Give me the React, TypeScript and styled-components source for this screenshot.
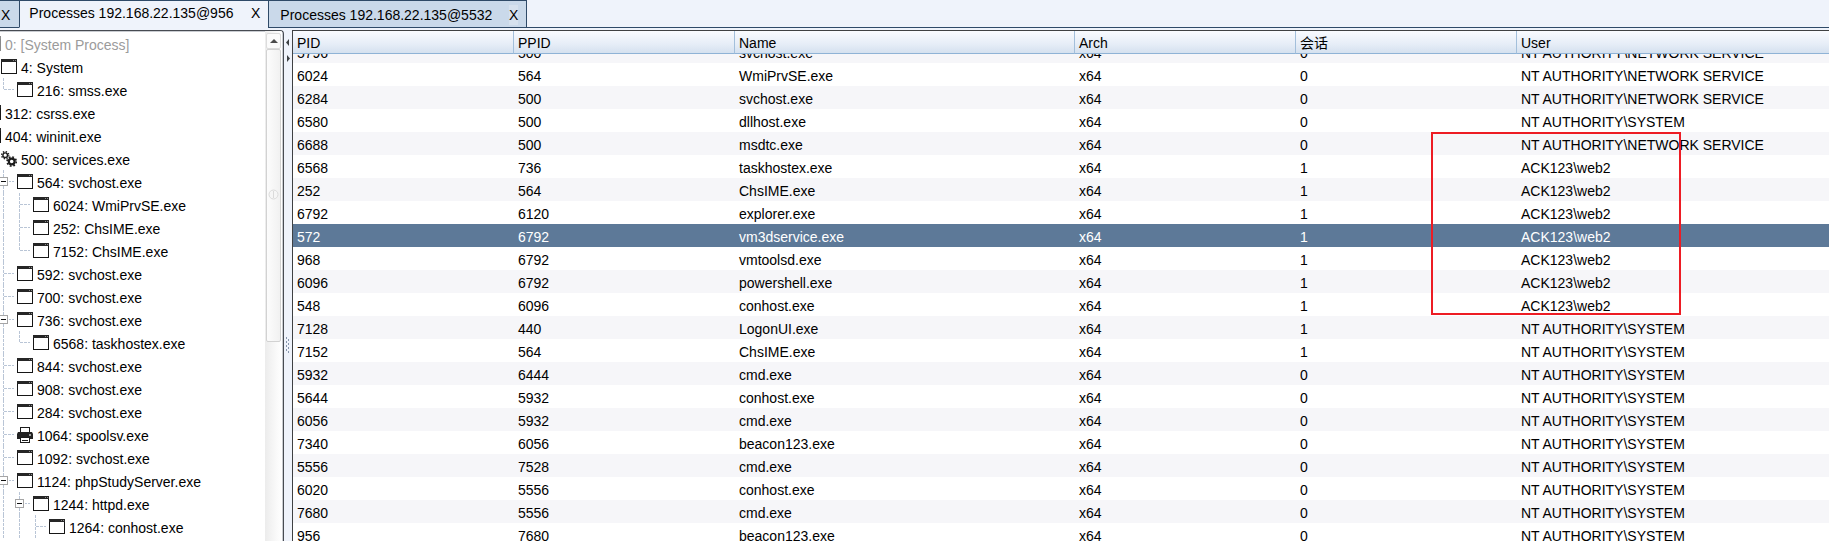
import React, { useLayoutEffect, useRef } from "react";
import styled, { createGlobalStyle, css } from "styled-components";

const GlobalStyle = createGlobalStyle`
  * { box-sizing: border-box; }
  body {
    margin: 0;
    background: #eff3fb;
    color: #000;
    font: 14px/20px "Liberation Sans", "Noto Sans CJK SC", Arial, sans-serif;
    overflow: hidden;
  }
  button { font: inherit; color: inherit; background: none; border: 0; padding: 0; }
`;

const navy = "#2f4a68";

const Window = styled.div`
  display: flex;
  flex-direction: column;
  height: 100vh;
`;

const TabBar = styled.div`
  display: flex;
  height: 28px;
  flex: none;
`;

const TabFiller = styled.div`
  flex: 1;
  border-bottom: 1px solid ${navy};
`;

const TabItem = styled.div<{ $active?: boolean; $clipped?: boolean }>`
  display: flex;
  justify-content: space-between;
  align-items: flex-start;
  gap: 14px;
  flex: none;
  border: 1px solid ${navy};
  background: #cad9ea;
  padding: 4px 8px 0 11px;
  min-width: 259px;
  ${(p) =>
    p.$active &&
    css`
      background: #eff3fb;
      border-bottom-color: #eff3fb;
      border-right: 0;
      padding: 2px 8px 0 9px;
      min-width: 249px;
    `}
  ${(p) =>
    p.$clipped &&
    css`
      border-left: 0;
      border-right: 0;
      padding: 4px 9px 0 1px;
      min-width: 0;
    `}
`;

const TabLabel = styled.button`
  white-space: nowrap;
`;

const CloseButton = styled.button<{ $lit?: boolean }>`
  background: ${(p) => (p.$lit ? "#d6e1ee" : "transparent")};
`;

const Panes = styled.div`
  display: flex;
  flex: 1;
  min-height: 0;
  padding-top: 2px;
`;

const TreePane = styled.section`
  display: flex;
  flex: none;
  width: 284px;
  background: #fff;
  border: 1px solid #474b52;
  border-left: 0;
  border-bottom: 0;
  border-top-right-radius: 4px;
  box-shadow: inset -1px 1px 0 #c9ccd1;
  padding-right: 1px;
  overflow: hidden;
`;

const TreeList = styled.ul`
  flex: 1;
  min-width: 0;
  list-style: none;
  margin: 0 0 0 -15px;
  padding: 1px 0 0;
`;

const TreeItem = styled.li<{ $disabled?: boolean }>`
  display: flex;
  align-items: center;
  height: 23px;
  color: ${(p) => (p.$disabled ? "#9b9b9b" : "#000")};
  svg { flex: none; }
`;

const TreeLabel = styled.span`
  padding: 3px 0 0 4px;
  white-space: nowrap;
`;

const ScrollTrack = styled.div`
  display: flex;
  flex-direction: column;
  align-items: center;
  flex: none;
  width: 17px;
  padding-top: 2px;
  background: linear-gradient(90deg, #ececec, #fafafa 70%, #fff);
`;

const ScrollArrow = styled.button`
  display: flex;
  width: 15px;
  height: 16px;
  align-items: center;
  justify-content: center;
  background: #fbfbfb;
  border: 1px solid #dcdcdc;
  border-radius: 2px;
`;

const ScrollThumb = styled.div`
  display: flex;
  justify-content: center;
  width: 15px;
  height: 293px;
  padding-top: 139px;
  background: linear-gradient(90deg, #fcfcfc, #f1f1f1);
  border: 1px solid #d2d2d2;
  border-radius: 2px;
`;

const Divider = styled.div`
  display: flex;
  flex-direction: column;
  align-items: center;
  flex: none;
  width: 8px;
  padding-top: 9px;
  gap: 9px;
`;

const DividerButton = styled.button`
  display: flex;
`;

const Grip = styled.svg`
  margin-top: 266px;
`;

const TablePane = styled.section`
  position: relative;
  flex: 1;
  min-width: 0;
  border-left: 1px solid #3f4143;
  border-top: 1px solid #3f4143;
`;

const TableScroller = styled.div`
  height: 100%;
  overflow: auto;
  background: #fff;
  scrollbar-width: none;
`;

const ProcessTable = styled.table`
  width: 100%;
  table-layout: fixed;
  border-collapse: separate;
  border-spacing: 0;
`;

const Column = styled.col<{ $width?: number }>`
  width: ${(p) => (p.$width ? `${p.$width}px` : "auto")};
`;

const HeadCell = styled.th`
  position: sticky;
  top: 0;
  height: 23px;
  padding: 2px 4px 0;
  line-height: 20px;
  font-weight: 400;
  text-align: left;
  background: linear-gradient(#f9fbff, #e6edf7 60%, #d5e1ef);
  border-bottom: 1px solid #8fb3d6;
  border-right: 1px solid #a3bfdb;
  &:last-child { border-right: 0; }
`;

const Row = styled.tr<{ $selected?: boolean }>`
  background: #fff;
  &:nth-child(odd) { background: #f6f6f9; }
  ${(p) =>
    p.$selected &&
    css`
      && { background: #5d7998; color: #fff; }
    `}
`;

const Cell = styled.td`
  height: 23px;
  padding: 3px 4px 0;
  white-space: nowrap;
`;

const Highlight = styled.div`
  position: absolute;
  left: 1138px;
  top: 101px;
  width: 250px;
  height: 183px;
  border: 2px solid #ed1c24;
  pointer-events: none;
`;

/* Branch lines of one tree level: "|" passes by, "T" branches, "L" ends,
   "+" branches at an expanded node, "." is empty. */
const Branch = ({ kind }: { kind: string }) => (
  <svg width="16" height="23" overflow="visible" aria-hidden="true">
    {"|T+".includes(kind) && (
      <path d="M2.5 0V23" stroke="#b9c5d6" strokeDasharray="3 1" fill="none" />
    )}
    {kind === "L" && (
      <path d="M2.5 0V12" stroke="#b9c5d6" strokeDasharray="3 1" fill="none" />
    )}
    {"TL".includes(kind) && (
      <path d="M3 11.5H13" stroke="#b9c5d6" strokeDasharray="3 1" fill="none" />
    )}
    {kind === "+" && (
      <g>
        <path d="M8 11.5H13" stroke="#b9c5d6" strokeDasharray="2 1" />
        <rect x="-1.5" y="7.5" width="8" height="8" fill="#fff" stroke="#a5a5a5" />
        <path d="M0 11.5H5" stroke="#111" />
      </g>
    )}
  </svg>
);

const WindowIcon = ({ faded }: { faded?: boolean }) => (
  <svg width="16" height="15" opacity={faded ? 0.5 : 1} aria-hidden="true">
    <rect x="0.5" y="0.5" width="15" height="14" fill="#fff" stroke="#161616" />
    <rect width="16" height="3" fill="#262626" />
    <path d="M12 1.5H13M14 1.5H15" stroke="#8a8a8a" />
  </svg>
);

const GearsIcon = () => (
  <svg width="16" height="16" fill="none" stroke="#1c1c1c" aria-hidden="true">
    <circle cx="4.2" cy="4.2" r="2.3" strokeWidth="1.4" />
    <circle cx="4.2" cy="4.2" r="3.6" strokeWidth="1.4" strokeDasharray="1.4 1.43" />
    <circle cx="10.7" cy="10.5" r="2.9" strokeWidth="2.2" />
    <circle cx="10.7" cy="10.5" r="4.6" strokeWidth="1.6" strokeDasharray="1.8 1.81" />
  </svg>
);

const PrinterIcon = () => (
  <svg width="16" height="16" aria-hidden="true">
    <rect x="3.5" y="0.5" width="9" height="6" fill="#fff" stroke="#1c1c1c" />
    <path d="M1 5H15L16 7V12H0V7Z" fill="#222" />
    <rect x="12" y="7" width="2" height="2" fill="#999" />
    <rect x="3.5" y="10.5" width="9" height="5" fill="#fff" stroke="#1c1c1c" />
    <path d="M5 13.5H11" stroke="#1c1c1c" />
  </svg>
);

type Node = { branches: string; label: string; icon?: "gears" | "printer"; disabled?: boolean };

const nodes: Node[] = [
  { branches: "", label: "0: [System Process]", disabled: true },
  { branches: ".", label: "4: System" },
  { branches: ".L", label: "216: smss.exe" },
  { branches: "", label: "312: csrss.exe" },
  { branches: "", label: "404: wininit.exe" },
  { branches: ".", label: "500: services.exe", icon: "gears" },
  { branches: ".+", label: "564: svchost.exe" },
  { branches: ".|T", label: "6024: WmiPrvSE.exe" },
  { branches: ".|T", label: "252: ChsIME.exe" },
  { branches: ".|L", label: "7152: ChsIME.exe" },
  { branches: ".T", label: "592: svchost.exe" },
  { branches: ".T", label: "700: svchost.exe" },
  { branches: ".+", label: "736: svchost.exe" },
  { branches: ".|L", label: "6568: taskhostex.exe" },
  { branches: ".T", label: "844: svchost.exe" },
  { branches: ".T", label: "908: svchost.exe" },
  { branches: ".T", label: "284: svchost.exe" },
  { branches: ".T", label: "1064: spoolsv.exe", icon: "printer" },
  { branches: ".T", label: "1092: svchost.exe" },
  { branches: ".+", label: "1124: phpStudyServer.exe" },
  { branches: ".|+", label: "1244: httpd.exe" },
  { branches: ".||T", label: "1264: conhost.exe" },
];

const columns: { title: string; width?: number }[] = [
  { title: "PID", width: 221 },
  { title: "PPID", width: 221 },
  { title: "Name", width: 340 },
  { title: "Arch", width: 221 },
  { title: "会话", width: 221 },
  { title: "User" },
];

const NET = "NT AUTHORITY\\NETWORK SERVICE";
const SYS = "NT AUTHORITY\\SYSTEM";
const WEB = "ACK123\\web2";

const processes: [number, number, string, number, string][] = [
  [5796, 500, "svchost.exe", 0, NET],
  [6024, 564, "WmiPrvSE.exe", 0, NET],
  [6284, 500, "svchost.exe", 0, NET],
  [6580, 500, "dllhost.exe", 0, SYS],
  [6688, 500, "msdtc.exe", 0, NET],
  [6568, 736, "taskhostex.exe", 1, WEB],
  [252, 564, "ChsIME.exe", 1, WEB],
  [6792, 6120, "explorer.exe", 1, WEB],
  [572, 6792, "vm3dservice.exe", 1, WEB],
  [968, 6792, "vmtoolsd.exe", 1, WEB],
  [6096, 6792, "powershell.exe", 1, WEB],
  [548, 6096, "conhost.exe", 1, WEB],
  [7128, 440, "LogonUI.exe", 1, SYS],
  [7152, 564, "ChsIME.exe", 1, SYS],
  [5932, 6444, "cmd.exe", 0, SYS],
  [5644, 5932, "conhost.exe", 0, SYS],
  [6056, 5932, "cmd.exe", 0, SYS],
  [7340, 6056, "beacon123.exe", 0, SYS],
  [5556, 7528, "cmd.exe", 0, SYS],
  [6020, 5556, "conhost.exe", 0, SYS],
  [7680, 5556, "cmd.exe", 0, SYS],
  [956, 7680, "beacon123.exe", 0, SYS],
];

const selectedPid = 572;
const initialScroll = 14;

export default function App() {
  const scroller = useRef<HTMLDivElement>(null);

  useLayoutEffect(() => {
    if (scroller.current) scroller.current.scrollTop = initialScroll;
  }, []);

  return (
    <Window>
      <GlobalStyle />
      <TabBar>
        <TabItem $clipped>
          <CloseButton>X</CloseButton>
        </TabItem>
        <TabItem $active>
          <TabLabel>Processes 192.168.22.135@956</TabLabel>
          <CloseButton>X</CloseButton>
        </TabItem>
        <TabItem>
          <TabLabel>Processes 192.168.22.135@5532</TabLabel>
          <CloseButton $lit>X</CloseButton>
        </TabItem>
        <TabFiller />
      </TabBar>
      <Panes>
        <TreePane>
          <TreeList role="tree" aria-label="Processes">
            {nodes.map((n) => (
              <TreeItem key={n.label} role="treeitem" $disabled={n.disabled}>
                {n.branches.split("").map((kind, i) => (
                  <Branch key={i} kind={kind} />
                ))}
                {n.icon === "gears" ? (
                  <GearsIcon />
                ) : n.icon === "printer" ? (
                  <PrinterIcon />
                ) : (
                  <WindowIcon faded={n.disabled} />
                )}
                <TreeLabel>{n.label}</TreeLabel>
              </TreeItem>
            ))}
          </TreeList>
          <ScrollTrack>
            <ScrollArrow aria-label="Scroll up">
              <svg width="8" height="4">
                <path d="M0 4L4 0L8 4Z" fill="#4c4c4c" />
              </svg>
            </ScrollArrow>
            <ScrollThumb>
              <svg width="11" height="11" fill="#f6f6f6" stroke="#dadada">
                <circle cx="5.5" cy="5.5" r="4.5" />
                <path d="M5.5 2V9" />
              </svg>
            </ScrollThumb>
          </ScrollTrack>
        </TreePane>
        <Divider>
          <DividerButton aria-label="Collapse left">
            <svg width="4" height="7">
              <path d="M3 0V7L0 3.5Z" fill="#3c4043" />
            </svg>
          </DividerButton>
          <DividerButton aria-label="Collapse right">
            <svg width="4" height="7">
              <path d="M1 0V7L4 3.5Z" fill="#3c4043" />
            </svg>
          </DividerButton>
          <Grip width="4" height="18" fill="#8796ad">
            {[0, 4, 8, 12].map((y) => (
              <g key={y}>
                <rect x="0" y={y} width="1" height="2" />
                <rect x="2" y={y + 2} width="1" height="2" />
              </g>
            ))}
          </Grip>
        </Divider>
        <TablePane>
          <TableScroller ref={scroller}>
            <ProcessTable>
              <colgroup>
                {columns.map((c) => (
                  <Column key={c.title} $width={c.width} />
                ))}
              </colgroup>
              <thead>
                <tr>
                  {columns.map((c) => (
                    <HeadCell key={c.title} scope="col">
                      {c.title}
                    </HeadCell>
                  ))}
                </tr>
              </thead>
              <tbody>
                {processes.map(([pid, ppid, name, session, user]) => (
                  <Row key={pid} $selected={pid === selectedPid}>
                    <Cell>{pid}</Cell>
                    <Cell>{ppid}</Cell>
                    <Cell>{name}</Cell>
                    <Cell>x64</Cell>
                    <Cell>{session}</Cell>
                    <Cell>{user}</Cell>
                  </Row>
                ))}
              </tbody>
            </ProcessTable>
          </TableScroller>
          <Highlight />
        </TablePane>
      </Panes>
    </Window>
  );
}
